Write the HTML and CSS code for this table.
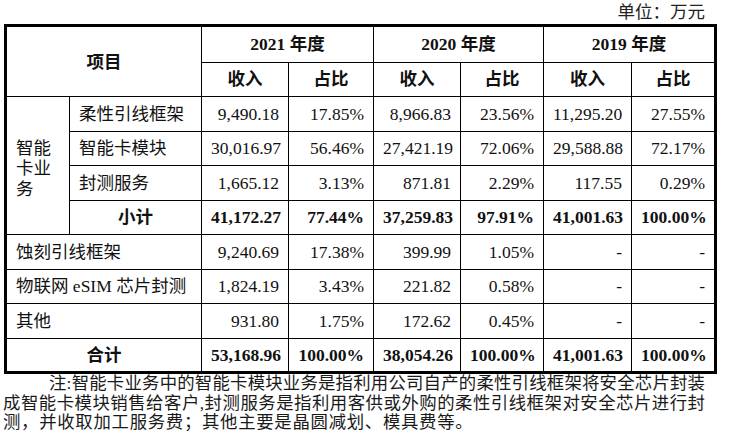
FILE: index.html
```html
<!DOCTYPE html>
<html lang="zh-CN">
<head>
<meta charset="utf-8">
<title>收入构成</title>
<link rel="stylesheet" href="styles.css">
</head>
<body>
<div class="unit">单位：万元</div>
<table class="rev">
  <colgroup>
    <col class="c1"><col class="c2"><col class="c3"><col class="c4"><col class="c5"><col class="c6"><col class="c7"><col class="c8">
  </colgroup>
  <tr class="h1">
    <th colspan="2" rowspan="2">项目</th>
    <th colspan="2">2021 年度</th>
    <th colspan="2">2020 年度</th>
    <th colspan="2">2019 年度</th>
  </tr>
  <tr class="h2">
    <th>收入</th><th>占比</th><th>收入</th><th>占比</th><th>收入</th><th>占比</th>
  </tr>
  <tr>
    <td class="grp" rowspan="4">智能<br>卡业<br>务</td>
    <td class="lbl">柔性引线框架</td>
    <td class="num">9,490.18</td><td class="num">17.85%</td>
    <td class="num">8,966.83</td><td class="num">23.56%</td>
    <td class="num">11,295.20</td><td class="num">27.55%</td>
  </tr>
  <tr>
    <td class="lbl">智能卡模块</td>
    <td class="num">30,016.97</td><td class="num">56.46%</td>
    <td class="num">27,421.19</td><td class="num">72.06%</td>
    <td class="num">29,588.88</td><td class="num">72.17%</td>
  </tr>
  <tr>
    <td class="lbl">封测服务</td>
    <td class="num">1,665.12</td><td class="num">3.13%</td>
    <td class="num">871.81</td><td class="num">2.29%</td>
    <td class="num">117.55</td><td class="num">0.29%</td>
  </tr>
  <tr class="bold">
    <td class="ctr">小计</td>
    <td class="num">41,172.27</td><td class="num">77.44%</td>
    <td class="num">37,259.83</td><td class="num">97.91%</td>
    <td class="num">41,001.63</td><td class="num">100.00%</td>
  </tr>
  <tr>
    <td class="lbl wide" colspan="2">蚀刻引线框架</td>
    <td class="num">9,240.69</td><td class="num">17.38%</td>
    <td class="num">399.99</td><td class="num">1.05%</td>
    <td class="num">-</td><td class="num">-</td>
  </tr>
  <tr>
    <td class="lbl wide" colspan="2">物联网 eSIM 芯片封测</td>
    <td class="num">1,824.19</td><td class="num">3.43%</td>
    <td class="num">221.82</td><td class="num">0.58%</td>
    <td class="num">-</td><td class="num">-</td>
  </tr>
  <tr>
    <td class="lbl wide" colspan="2">其他</td>
    <td class="num">931.80</td><td class="num">1.75%</td>
    <td class="num">172.62</td><td class="num">0.45%</td>
    <td class="num">-</td><td class="num">-</td>
  </tr>
  <tr class="bold last">
    <td class="ctr" colspan="2">合计</td>
    <td class="num">53,168.96</td><td class="num">100.00%</td>
    <td class="num">38,054.26</td><td class="num">100.00%</td>
    <td class="num">41,001.63</td><td class="num">100.00%</td>
  </tr>
</table>
<p class="note">
  <span class="ln first">注:智能卡业务中的智能卡模块业务是指利用公司自产的柔性引线框架将安全芯片封装</span>
  <span class="ln">成智能卡模块销售给客户,封测服务是指利用客供或外购的柔性引线框架对安全芯片进行封</span>
  <span class="ln end">测，并收取加工服务费；其他主要是晶圆减划、模具费等。</span>
</p>
</body>
</html>
```

FILE: styles.css
```css
html, body {
  margin: 0;
  padding: 0;
  background: #fff;
}

body {
  width: 746px;
  height: 439px;
  overflow: hidden;
  color: #111;
  font-family: "Liberation Serif", "Noto Sans CJK SC", serif;
  font-size: 17.5px;
}

.unit {
  height: 24px;
  line-height: 24px;
  text-align: right;
  padding-right: 41px;
  color: #222;
}

.rev {
  border-collapse: collapse;
  table-layout: fixed;
  width: 710px;
  margin-left: 4px;
  border: 3px solid #000;
}

.c1 { width: 64px; }
.c2 { width: 132px; }
.c3 { width: 87px; }
.c4 { width: 85px; }
.c5 { width: 87px; }
.c6 { width: 83px; }
.c7 { width: 88px; }
.c8 { width: 84px; }

.rev th,
.rev td {
  border: 1px solid #000;
  padding: 0 9px;
  height: 33.5px;
  line-height: 20px;
  white-space: nowrap;
}

.rev tr.h1 th { height: 34.5px; }
.rev tr.last td { height: 32.5px; }

.rev th {
  font-weight: bold;
  text-align: center;
}

.num { text-align: right; }

.lbl {
  text-align: left;
  padding-left: 10px;
}

.lbl.wide { padding-left: 9px; }

.ctr { text-align: center; }

.bold td { font-weight: bold; }

.rev td.grp {
  vertical-align: middle;
  text-align: left;
  padding-top: 6px;
  line-height: 20.5px;
}

.note {
  margin: 0 0 0 3px;
  width: 702px;
  line-height: 19.5px;
  font-size: 17.4px;
  color: #1a1a1a;
}

.ln {
  display: block;
  text-align: justify;
  text-align-last: justify;
}

.ln.first { text-indent: 46px; }

.ln.end {
  text-align: left;
  text-align-last: left;
  letter-spacing: 0.7px;
}
```
